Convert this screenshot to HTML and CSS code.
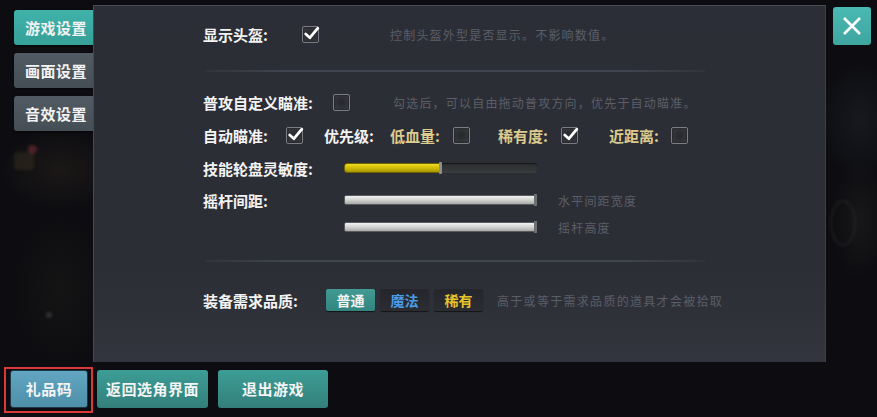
FILE: index.html
```html
<!DOCTYPE html>
<html lang="zh">
<head>
<meta charset="utf-8">
<title>设置</title>
<link rel="stylesheet" href="styles.css">
</head>
<body>
<div class="screen">
  <div class="scene-dot dot-a"></div>
  <div class="scene-dot dot-b"></div>
  <div class="scene-dot dot-c"></div>
  <div class="scene-dot dot-d"></div>
  <div class="top">
    <nav class="tabs">
      <div class="tab active">游戏设置</div>
      <div class="tab">画面设置</div>
      <div class="tab">音效设置</div>
    </nav>
    <section class="panel">
      <div class="row r1">
        <span class="label w-show">显示头盔:</span>
        <span class="cb checked"><svg viewBox="0 0 18 18"><path d="M3.5 9.5 L7.5 13 L15 4"/></svg></span>
        <span class="desc d1">控制头盔外型是否显示。不影响数值。</span>
      </div>
      <div class="divider dv1"></div>
      <div class="row r2">
        <span class="label w-custom">普攻自定义瞄准:</span>
        <span class="cb"></span>
        <span class="desc d2">勾选后，可以自由拖动普攻方向，优先于自动瞄准。</span>
      </div>
      <div class="row r3">
        <span class="label w-auto">自动瞄准:</span>
        <span class="cb checked"><svg viewBox="0 0 18 18"><path d="M3.5 9.5 L7.5 13 L15 4"/></svg></span>
        <span class="label w-prio">优先级:</span>
        <span class="label gold w-low">低血量:</span>
        <span class="cb"></span>
        <span class="label gold w-rare">稀有度:</span>
        <span class="cb checked"><svg viewBox="0 0 18 18"><path d="M3.5 9.5 L7.5 13 L15 4"/></svg></span>
        <span class="label gold w-near">近距离:</span>
        <span class="cb"></span>
      </div>
      <div class="row r4">
        <span class="label w-slider">技能轮盘灵敏度:</span>
        <div class="track dark"><div class="fill" style="width:49.5%"></div><div class="knob" style="left:49.5%"></div></div>
      </div>
      <div class="row r5">
        <span class="label w-slider">摇杆间距:</span>
        <div class="track light"><div class="end"></div></div>
        <span class="desc d3">水平间距宽度</span>
      </div>
      <div class="row r6">
        <span class="label w-slider"></span>
        <div class="track light"><div class="end"></div></div>
        <span class="desc d3">摇杆高度</span>
      </div>
      <div class="divider dv2"></div>
      <div class="row r7">
        <span class="label w-quality">装备需求品质:</span>
        <span class="qbtn q-normal">普通</span>
        <span class="qbtn q-magic">魔法</span>
        <span class="qbtn q-rare">稀有</span>
        <span class="desc d4">高于或等于需求品质的道具才会被拾取</span>
      </div>
    </section>
    <div class="close">
      <svg viewBox="0 0 38 38"><path d="M11 11 L27 27 M27 11 L11 27"/></svg>
    </div>
  </div>
  <div class="bottom">
    <div class="highlight"><div class="btn gift">礼品码</div></div>
    <div class="btn back">返回选角界面</div>
    <div class="btn quit">退出游戏</div>
  </div>
</div>
</body>
</html>
```
FILE: styles.css
```css
* { box-sizing: border-box; }
html, body { margin: 0; padding: 0; }
body {
  width: 877px;
  height: 417px;
  overflow: hidden;
  background: #0c0c10;
  font-family: "Noto Sans CJK SC", "Noto Sans", sans-serif;
}
.screen {
  position: relative;
  width: 877px;
  height: 417px;
  background:
    radial-gradient(ellipse 60px 40px at 60px 170px, rgba(70,55,40,0.25), transparent),
    radial-gradient(ellipse 50px 80px at 60px 290px, rgba(40,40,30,0.25), transparent),
    radial-gradient(ellipse 30px 60px at 860px 220px, rgba(55,55,50,0.25), transparent),
    radial-gradient(ellipse 40px 60px at 860px 120px, rgba(50,60,70,0.25), transparent),
    #0d0d11;
}
.scene-dot { position: absolute; border-radius: 50%; filter: blur(1.5px); }
.dot-a { left: 28px; top: 145px; width: 9px; height: 9px; background: rgba(150,55,65,0.45); }
.dot-b { left: 14px; top: 152px; width: 20px; height: 18px; background: rgba(80,70,40,0.3); border-radius: 4px; }
.dot-c { left: 46px; top: 312px; width: 6px; height: 6px; background: rgba(110,110,110,0.35); }
.dot-d { left: 830px; top: 200px; width: 26px; height: 46px; border: 2px solid rgba(60,60,55,0.35); background: transparent; }

.top {
  display: flex;
  align-items: flex-start;
  padding-top: 5px;
  position: relative;
}
.tabs {
  width: 93px;
  padding: 5px 0 0 14px;
  display: flex;
  flex-direction: column;
  gap: 8px;
}
.tab {
  width: 84px;
  height: 35px;
  border-radius: 3px;
  background: linear-gradient(#525b63, #454d55);
  color: #f2f2f2;
  font-size: 15px;
  font-weight: 700;
  line-height: 35px;
  padding-left: 11px;
  letter-spacing: 0.5px;
  box-shadow: 0 1px 2px rgba(0,0,0,0.6);
}
.tab.active { background: linear-gradient(#40b3ab, #35a098); }

.panel {
  position: relative;
  z-index: 2;
  width: 733px;
  height: 357px;
  background: linear-gradient(#2c2e37 0%, #2c2e36 75%, #33353e 100%);
  border-top: 1px solid #474a53;
  border-left: 1px solid #474a53;
  border-right: 1px solid #3c3f48;
  padding: 18px 0 0 109px;
  color: #f0f0f0;
}
.row {
  display: flex;
  align-items: center;
  height: 20px;
}
.label {
  font-size: 15px;
  font-weight: 700;
  white-space: nowrap;
  color: #f3f3f3;
  flex: none;
}
.gold { color: #dccb8e; }
.w-show { width: 99px; }
.w-custom { width: 130px; }
.w-auto { width: 83px; }
.w-prio { width: 66px; margin-left: 21px; }
.w-low { width: 63px; }
.w-rare { width: 63px; margin-left: 28px; }
.w-near { width: 62px; margin-left: 31px; }
.w-slider { width: 141px; }
.w-quality { width: 123px; }

.cb {
  flex: none;
  width: 17px;
  height: 17px;
  border: 1px solid #7a7d84;
  border-radius: 2px;
  background: radial-gradient(circle at 50% 50%, #2a2b30 20%, #3c3e44 100%);
  box-shadow: inset 0 0 2px rgba(0,0,0,0.8);
  position: relative;
}
.cb svg {
  position: absolute;
  left: -1px;
  top: -3px;
  width: 19px;
  height: 19px;
  overflow: visible;
}
.cb svg path {
  fill: none;
  stroke: #ffffff;
  stroke-width: 2.6;
  stroke-linecap: round;
  stroke-linejoin: round;
}
.desc {
  font-size: 12px;
  color: #5b5e67;
  letter-spacing: 1.2px;
  white-space: nowrap;
}
.d1 { margin-left: 71px; }
.d2 { margin-left: 43px; }
.d3 { margin-left: 22px; }
.d4 { margin-left: 14px; letter-spacing: 1.3px; }

.divider {
  height: 2px;
  width: 500px;
  margin-left: 2px;
  background: linear-gradient(90deg, rgba(70,75,85,0.2), #40444e 15%, #40444e 85%, rgba(70,75,85,0.2));
}
.dv1 { margin-top: 26px; }
.r2 { margin-top: 20px; }
.r3 { margin-top: 13px; }
.r4 { margin-top: 13px; }
.r5 { margin-top: 12px; }
.r6 { margin-top: 7px; }
.dv2 { margin-top: 23px; }
.r7 { margin-top: 27px; height: 22px; }

.track {
  position: relative;
  width: 193px;
  height: 10px;
  border-radius: 3px;
  flex: none;
}
.track.dark {
  background: linear-gradient(#2b2c30, #3a3c40);
  box-shadow: inset 0 1px 1px rgba(0,0,0,0.5);
}
.fill {
  height: 100%;
  border-radius: 3px 0 0 3px;
  background: linear-gradient(#f0dd20, #c9b400 60%, #a89500);
  border: 1px solid #6f6400;
}
.knob {
  position: absolute;
  top: -1px;
  width: 3px;
  height: 12px;
  margin-left: -1px;
  background: #8d8f92;
  border-radius: 1px;
}
.track.light {
  width: 192px;
  height: 10px;
  background: linear-gradient(#f2f2f2, #d6d6d6 45%, #a9a9a9);
  border: 1px solid #5a5b5e;
  border-radius: 2px;
}
.end {
  position: absolute;
  right: -2px;
  top: -2px;
  width: 3px;
  height: 12px;
  background: #6d6f72;
}

.qbtn {
  flex: none;
  width: 49px;
  height: 22px;
  margin-right: 5px;
  border-radius: 2px;
  font-size: 14px;
  font-weight: 700;
  text-align: center;
  line-height: 22px;
  background: linear-gradient(#24262b, #2b2d32);
  box-shadow: 0 1px 1px rgba(0,0,0,0.6);
}
.q-normal { background: linear-gradient(#409a93, #33867f); color: #f3f3f3; }
.q-magic { color: #4b9ce6; }
.q-rare { color: #e6c42a; margin-right: 0; }

.close {
  width: 38px;
  height: 38px;
  margin: 2px 0 0 7px;
  border-radius: 3px;
  background: linear-gradient(#4ab9b3, #3ea59f);
}
.close svg { width: 38px; height: 38px; display: block; }
.close svg path { stroke: #ffffff; stroke-width: 2.6; fill: none; }

.bottom {
  display: flex;
  align-items: flex-start;
  padding: 5px 0 0 4px;
}
.highlight {
  width: 89px;
  height: 46px;
  border: 2px solid #d83a3a;
  padding: 1px 0 0 4px;
}
.btn {
  height: 38px;
  border-radius: 3px;
  color: #f4f4f4;
  font-size: 15px;
  font-weight: 700;
  text-align: center;
  line-height: 38px;
  letter-spacing: 0.5px;
}
.gift {
  width: 78px;
  background: linear-gradient(#62a6c2, #4e8fa9);
  border: 1px solid #1f3844;
  line-height: 36px;
}
.back {
  width: 111px;
  margin: 3px 0 0 4px;
  background: linear-gradient(#3d9d96, #337f7a);
}
.quit {
  width: 110px;
  margin: 3px 0 0 10px;
  background: linear-gradient(#3d9d96, #337f7a);
}
```
